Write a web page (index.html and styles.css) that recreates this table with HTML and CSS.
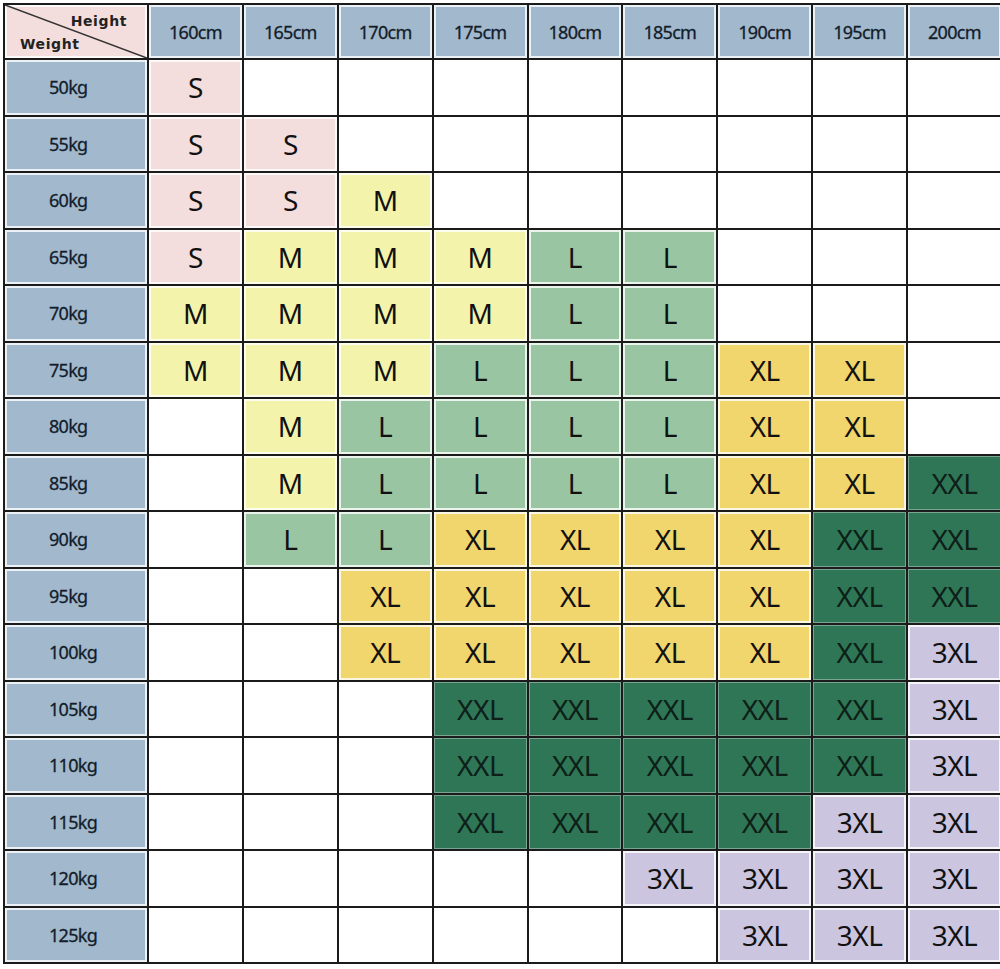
FILE: index.html
```html
<!DOCTYPE html>
<html>
<head>
<meta charset="utf-8">
<link rel="stylesheet" href="styles.css">
</head>
<body>
<div class="chart">
  <div class="corner">
    <svg class="diag" viewBox="0 0 100 100" preserveAspectRatio="none"><line x1="0" y1="0" x2="100" y2="100" stroke="#333" stroke-width="1.6" vector-effect="non-scaling-stroke"/></svg>
    <span class="c-height">Height</span>
    <span class="c-weight">Weight</span>
  </div>
  <div class="hd">160cm</div><div class="hd">165cm</div><div class="hd">170cm</div><div class="hd">175cm</div><div class="hd">180cm</div><div class="hd">185cm</div><div class="hd">190cm</div><div class="hd">195cm</div><div class="hd">200cm</div>

  <div class="rw">50kg</div>
  <div class="c s">S</div><div class="c"></div><div class="c"></div><div class="c"></div><div class="c"></div><div class="c"></div><div class="c"></div><div class="c"></div><div class="c"></div>

  <div class="rw">55kg</div>
  <div class="c s">S</div><div class="c s">S</div><div class="c"></div><div class="c"></div><div class="c"></div><div class="c"></div><div class="c"></div><div class="c"></div><div class="c"></div>

  <div class="rw">60kg</div>
  <div class="c s">S</div><div class="c s">S</div><div class="c m">M</div><div class="c"></div><div class="c"></div><div class="c"></div><div class="c"></div><div class="c"></div><div class="c"></div>

  <div class="rw">65kg</div>
  <div class="c s">S</div><div class="c m">M</div><div class="c m">M</div><div class="c m">M</div><div class="c l">L</div><div class="c l">L</div><div class="c"></div><div class="c"></div><div class="c"></div>

  <div class="rw">70kg</div>
  <div class="c m">M</div><div class="c m">M</div><div class="c m">M</div><div class="c m">M</div><div class="c l">L</div><div class="c l">L</div><div class="c"></div><div class="c"></div><div class="c"></div>

  <div class="rw">75kg</div>
  <div class="c m">M</div><div class="c m">M</div><div class="c m">M</div><div class="c l">L</div><div class="c l">L</div><div class="c l">L</div><div class="c xl">XL</div><div class="c xl">XL</div><div class="c"></div>

  <div class="rw">80kg</div>
  <div class="c"></div><div class="c m">M</div><div class="c l">L</div><div class="c l">L</div><div class="c l">L</div><div class="c l">L</div><div class="c xl">XL</div><div class="c xl">XL</div><div class="c"></div>

  <div class="rw">85kg</div>
  <div class="c"></div><div class="c m">M</div><div class="c l">L</div><div class="c l">L</div><div class="c l">L</div><div class="c l">L</div><div class="c xl">XL</div><div class="c xl">XL</div><div class="c xxl">XXL</div>

  <div class="rw">90kg</div>
  <div class="c"></div><div class="c l">L</div><div class="c l">L</div><div class="c xl">XL</div><div class="c xl">XL</div><div class="c xl">XL</div><div class="c xl">XL</div><div class="c xxl">XXL</div><div class="c xxl">XXL</div>

  <div class="rw">95kg</div>
  <div class="c"></div><div class="c"></div><div class="c xl">XL</div><div class="c xl">XL</div><div class="c xl">XL</div><div class="c xl">XL</div><div class="c xl">XL</div><div class="c xxl">XXL</div><div class="c xxl">XXL</div>

  <div class="rw">100kg</div>
  <div class="c"></div><div class="c"></div><div class="c xl">XL</div><div class="c xl">XL</div><div class="c xl">XL</div><div class="c xl">XL</div><div class="c xl">XL</div><div class="c xxl">XXL</div><div class="c x3">3XL</div>

  <div class="rw">105kg</div>
  <div class="c"></div><div class="c"></div><div class="c"></div><div class="c xxl">XXL</div><div class="c xxl">XXL</div><div class="c xxl">XXL</div><div class="c xxl">XXL</div><div class="c xxl">XXL</div><div class="c x3">3XL</div>

  <div class="rw">110kg</div>
  <div class="c"></div><div class="c"></div><div class="c"></div><div class="c xxl">XXL</div><div class="c xxl">XXL</div><div class="c xxl">XXL</div><div class="c xxl">XXL</div><div class="c xxl">XXL</div><div class="c x3">3XL</div>

  <div class="rw">115kg</div>
  <div class="c"></div><div class="c"></div><div class="c"></div><div class="c xxl">XXL</div><div class="c xxl">XXL</div><div class="c xxl">XXL</div><div class="c xxl">XXL</div><div class="c x3">3XL</div><div class="c x3">3XL</div>

  <div class="rw">120kg</div>
  <div class="c"></div><div class="c"></div><div class="c"></div><div class="c"></div><div class="c"></div><div class="c x3">3XL</div><div class="c x3">3XL</div><div class="c x3">3XL</div><div class="c x3">3XL</div>

  <div class="rw">125kg</div>
  <div class="c"></div><div class="c"></div><div class="c"></div><div class="c"></div><div class="c"></div><div class="c"></div><div class="c x3">3XL</div><div class="c x3">3XL</div><div class="c x3">3XL</div>
</div>
</body>
</html>
```

FILE: styles.css
```css
html, body {
  margin: 0;
  padding: 0;
  background: #ffffff;
  overflow: hidden;
}

body {
  padding: 3px 0 0 3px;
  width: 1000px;
  height: 969px;
  box-sizing: border-box;
}

.chart {
  display: grid;
  grid-template-columns: 142px repeat(9, 92.875px);
  grid-template-rows: 53px repeat(16, 54.5px);
  gap: 2px;
  padding: 2px;
  background: #1b1b1b;
  width: max-content;
  font-family: "Noto Sans", "Open Sans", sans-serif;
}

.chart > div {
  background: #ffffff;
  box-shadow: inset 0 0 0 2px rgba(255, 255, 255, 0.8);
  display: flex;
  align-items: center;
  justify-content: center;
}

.corner {
  position: relative;
  background: #f3dedd !important;
  flex-direction: column;
  align-items: stretch !important;
  justify-content: flex-start !important;
  font-family: "DejaVu Sans", Verdana, sans-serif;
  font-weight: bold;
  font-size: 14px;
  letter-spacing: 0.6px;
  color: #222;
}

.diag {
  position: absolute;
  left: 0;
  top: 0;
  width: 100%;
  height: 100%;
}

.c-height {
  align-self: flex-end;
  margin: 8px 20px 0 0;
  line-height: 16px;
}

.c-weight {
  align-self: flex-start;
  margin: 7px 0 0 15px;
  line-height: 16px;
}

.hd {
  background: #a2b8cd !important;
  font-size: 18px;
  color: #131d2a;
  letter-spacing: -0.7px;
  -webkit-text-stroke: 0.3px #131d2a;
}

.rw {
  background: #a2b8cd !important;
  font-size: 18px;
  color: #131d2a;
  justify-content: flex-start !important;
  padding-left: 44px;
  letter-spacing: -0.7px;
  -webkit-text-stroke: 0.3px #131d2a;
}

.c {
  font-size: 28px;
  color: #111;
  letter-spacing: -0.5px;
}

.chart > .s { background: #f3dedd; }
.chart > .m { background: #f4f3ab; }
.chart > .l { background: #9ac5a2; }
.chart > .xl { background: #f1d56d; }
.chart > .xxl { background: #2f7656; color: #0d1f17; box-shadow: inset 0 0 0 1px rgba(255,255,255,0.35); }
.chart > .x3 { background: #ccc5e0; }
```
